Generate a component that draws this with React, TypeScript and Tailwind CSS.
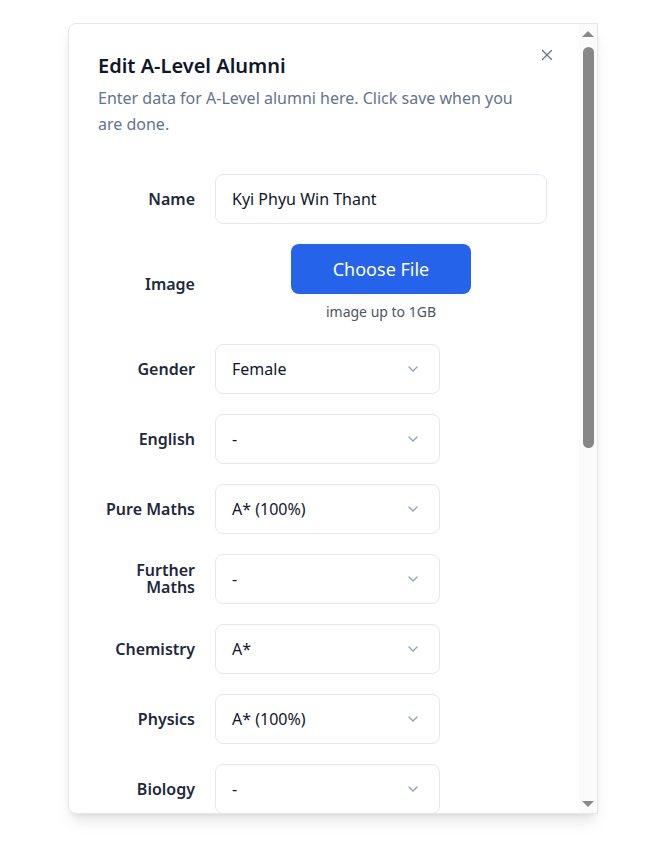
import { ChevronDown, X } from "lucide-react";

const subjects = [
  { label: "Gender", value: "Female" },
  { label: "English", value: "-" },
  { label: "Pure Maths", value: "A* (100%)" },
  { label: "Further Maths", value: "-" },
  { label: "Chemistry", value: "A*" },
  { label: "Physics", value: "A* (100%)" },
  { label: "Biology", value: "-" },
];

function SelectBox({ value }: { value: string }) {
  return (
    <div className="flex h-[50px] w-[225px] items-center justify-between rounded-lg border border-slate-200 bg-white pl-4 pr-[18px] text-[16px] text-slate-900">
      <span>{value}</span>
      <ChevronDown size={16} className="text-slate-400" />
    </div>
  );
}

function Scrollbar() {
  return (
    <div className="flex w-[18px] shrink-0 flex-col items-center bg-[#fbfbfb] pt-[7px] pb-[6px]">
      <div className="h-0 w-0 border-x-[6px] border-b-[6px] border-x-transparent border-b-[#8a8a8a]" />
      <div className="mt-[10px] h-[401px] w-[11px] rounded-full bg-[#878787]" />
      <div className="flex-1" />
      <div className="h-0 w-0 border-x-[6px] border-t-[6px] border-x-transparent border-t-[#8a8a8a]" />
    </div>
  );
}

export default function App() {
  return (
    <div className="min-h-screen bg-white pl-[68px] pt-[23px] font-['Noto_Sans',sans-serif]">
      <div className="relative flex h-[791px] w-[530px] overflow-hidden rounded-l-lg border border-gray-200 bg-white shadow-lg">
        <div className="flex-1 overflow-hidden pl-[29px] pr-[32px] pt-[28px]">
          <h2 className="text-[20px] font-semibold leading-7 text-slate-900">
            Edit A-Level Alumni
          </h2>
          <p className="mt-[5px] max-w-[432px] text-[16px] leading-[26px] text-slate-500">
            Enter data for A-Level alumni here. Click save when you are done.
          </p>

          <div className="mt-[37px] grid grid-cols-[97px_1fr] items-center gap-x-5 gap-y-5">
            <label className="text-right text-[16px] font-semibold leading-[17px] text-slate-800">
              Name
            </label>
            <div className="flex h-[50px] items-center rounded-lg border border-slate-200 px-4 text-[16px] text-slate-900">
              Kyi Phyu Win Thant
            </div>

            <label className="text-right text-[16px] font-semibold leading-[17px] text-slate-800">
              Image
            </label>
            <div className="mb-0.5 flex flex-col items-center">
              <button className="h-[50px] w-[180px] rounded-lg bg-[#2563eb] text-[18px] text-white">
                Choose File
              </button>
              <span className="mt-2 text-[14px] leading-5 text-gray-600">image up to 1GB</span>
            </div>

            {subjects.map((s) => (
              <div key={s.label} className="contents">
                <label className="text-right text-[16px] font-semibold leading-[17px] text-slate-800">
                  {s.label}
                </label>
                <SelectBox value={s.value} />
              </div>
            ))}
          </div>
        </div>
        <Scrollbar />
        <button className="absolute right-[41px] top-[22px] text-gray-500">
          <X size={18} strokeWidth={1.75} />
        </button>
      </div>
    </div>
  );
}
